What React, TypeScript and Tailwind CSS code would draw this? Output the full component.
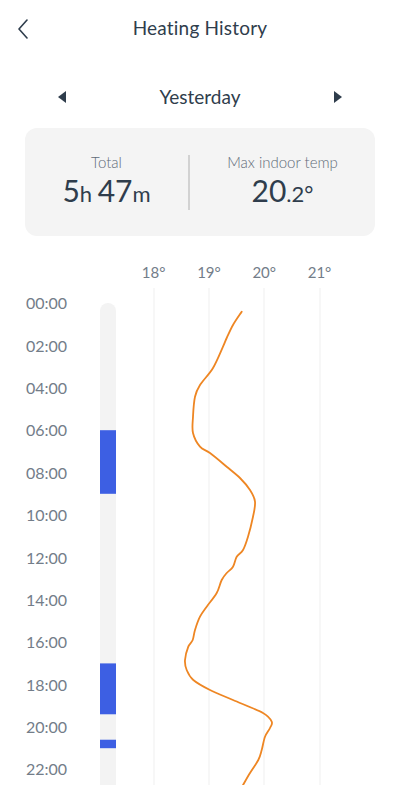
import React from "react";

type Block = { from: number; to: number };

// hours -> px inside the chart
const HOUR = 21.2;
const BAR_TOP = 21;

const heatingBlocks: Block[] = [
  { from: 6, to: 9 },
  { from: 17, to: 19.4 },
  { from: 20.6, to: 21 },
];

const times = ["00:00", "02:00", "04:00", "06:00", "08:00", "10:00", "12:00", "14:00", "16:00", "18:00", "20:00", "22:00"];
const degrees = ["18°", "19°", "20°", "21°"];

// indoor temp trace, page coords (x, y)
const trace: [number, number][] = [
  [241.7, 311.7], [233, 325], [226.7, 338], [223, 346.7], [213, 368], [200, 385], [195, 396.7],
  [193, 416.7], [193, 433], [200, 446.7], [210, 453], [226.7, 466.7], [240, 478], [250, 490],
  [255, 501.7], [253, 516.7], [248, 536.7], [243, 550], [236.7, 556.7], [233, 566.7], [226.7, 573],
  [221.7, 580], [216.7, 593], [206.7, 606.7], [200, 616.7], [195, 630], [192.7, 640], [188.3, 646.7],
  [185, 660], [186.7, 670], [193.3, 680], [210, 690], [233, 700], [263, 713], [271.7, 721.7],
  [270, 728], [265, 736.7], [261.7, 750], [258.3, 760], [250, 773], [243, 785],
];

function smoothPath(pts: [number, number][]) {
  const p = pts.map(([x, y]) => [x - 100, y - 282]);
  let d = `M${p[0][0]},${p[0][1]}`;
  for (let i = 0; i < p.length - 1; i++) {
    const p0 = p[i - 1] || p[i];
    const p1 = p[i];
    const p2 = p[i + 1];
    const p3 = p[i + 2] || p2;
    const c1x = p1[0] + (p2[0] - p0[0]) / 6;
    const c1y = p1[1] + (p2[1] - p0[1]) / 6;
    const c2x = p2[0] - (p3[0] - p1[0]) / 6;
    const c2y = p2[1] - (p3[1] - p1[1]) / 6;
    d += ` C${c1x.toFixed(1)},${c1y.toFixed(1)} ${c2x.toFixed(1)},${c2y.toFixed(1)} ${p2[0]},${p2[1]}`;
  }
  return d;
}

function Triangle({ dir }: { dir: "left" | "right" }) {
  return (
    <svg width="8" height="12" viewBox="0 0 8 12">
      <path d={dir === "left" ? "M8 0 L0 6 L8 12 Z" : "M0 0 L8 6 L0 12 Z"} fill="#2f3d4c" />
    </svg>
  );
}

export default function App() {
  return (
    <div className="w-[400px] h-[785px] overflow-hidden bg-white text-[#2f3d4c]" style={{ fontFamily: "Lato, 'Open Sans', sans-serif" }}>
      {/* header */}
      <div className="relative h-[56px] flex items-center justify-center">
        <svg className="absolute left-[17px] top-[19px]" width="12" height="20" viewBox="0 0 12 20">
          <path d="M10 1 L2 10 L10 19" fill="none" stroke="#2f3d4c" strokeWidth="1.6" strokeLinecap="round" strokeLinejoin="round" />
        </svg>
        <h1 className="text-[19px] tracking-[0.2px]">Heating History</h1>
      </div>

      {/* date switcher */}
      <div className="mt-[20px] h-[42px] flex items-center justify-between px-[58px]">
        <Triangle dir="left" />
        <span className="text-[19px]">Yesterday</span>
        <Triangle dir="right" />
      </div>

      {/* summary card */}
      <div className="mx-[25px] mt-[10px] h-[108px] rounded-[12px] bg-[#f4f4f4] flex items-center">
        <div className="w-[163px] flex flex-col items-center">
          <span className="text-[15px] font-light text-[#5f6b78]">Total</span>
          <span className="leading-[34px]">
            <span className="text-[30px]">5</span>
            <span className="text-[22px]">h </span>
            <span className="text-[30px]">47</span>
            <span className="text-[22px]">m</span>
          </span>
        </div>
        <div className="w-[2px] h-[55px] bg-[#d2d2d2]" />
        <div className="flex-1 flex flex-col items-center">
          <span className="text-[15px] font-light text-[#5f6b78]">Max indoor temp</span>
          <span className="leading-[34px]">
            <span className="text-[30px]">20</span>
            <span className="text-[22px]">.2°</span>
          </span>
        </div>
      </div>

      {/* axis */}
      <div className="mt-[26px] h-[20px] flex pl-[126px] text-[15px] text-[#737d89]">
        {degrees.map((d) => (
          <div key={d} className="w-[55.3px] flex items-center justify-center">
            {d}
          </div>
        ))}
      </div>

      {/* chart */}
      <div className="flex">
        <div className="w-[100px] pl-[26px] flex flex-col text-[16px] text-[#737d89]">
          {times.map((t) => (
            <div key={t} className="h-[42.4px] flex items-center">
              {t}
            </div>
          ))}
        </div>
        <svg width="300" height="503" viewBox="0 0 300 503">
          <path d={`M0,${BAR_TOP + 8} a8,8 0 0 1 16,0 V503 H0 Z`} fill="#f3f3f3" />
          {heatingBlocks.map((b) => (
            <rect key={b.from} x="0" y={BAR_TOP + b.from * HOUR} width="16" height={(b.to - b.from) * HOUR} fill="#3d5fe3" />
          ))}
          {[54, 109, 164, 220].map((x) => (
            <line key={x} x1={x} x2={x} y1="6" y2="503" stroke="#efefef" strokeWidth="1" />
          ))}
          <path d={smoothPath(trace)} fill="none" stroke="#ee8623" strokeWidth="1.8" strokeLinecap="round" strokeLinejoin="round" />
        </svg>
      </div>
    </div>
  );
}
